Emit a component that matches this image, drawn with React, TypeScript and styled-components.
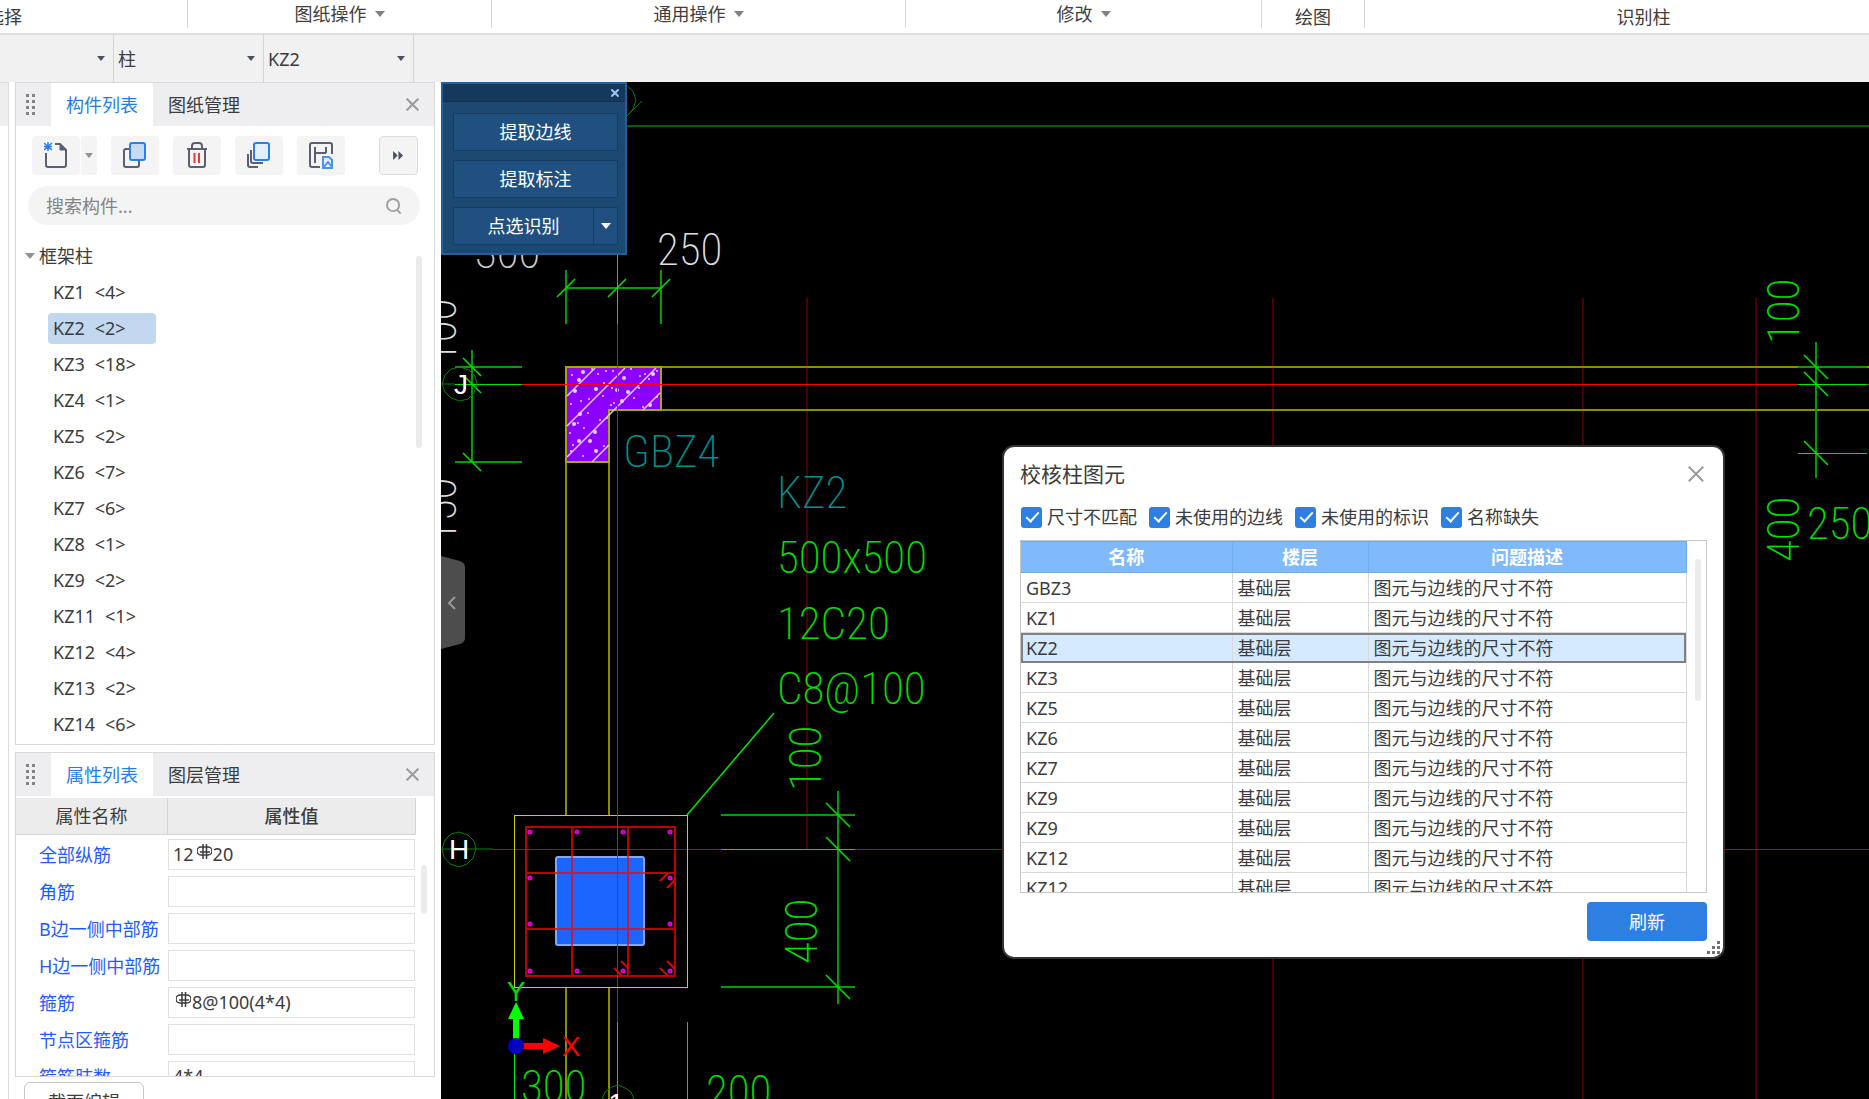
import React, { useState } from 'react';
import styled, { createGlobalStyle, css } from 'styled-components';

const Global = createGlobalStyle`
  *, *::before, *::after { box-sizing: border-box; }
  html, body { margin: 0; }
  body, button, input, select {
    font-family: 'Noto Sans', 'Noto Sans CJK SC', sans-serif;
    font-size: 18px;
    line-height: 24px;
    color: #3c3c3c;
  }
  button { border: 0; padding: 0; background: none; cursor: pointer; }
`;

const Page = styled.div`
  display: flex;
  flex-direction: column;
  height: 100vh;
  overflow: hidden;
  background: #fff;
`;

/* ---------- ribbon ---------- */

const Ribbon = styled.header`
  display: flex;
  flex: none;
  height: 35px;
  overflow: hidden;
  border-bottom: 2px solid #dedede;
`;

const RibbonGroup = styled.div<{ $basis: number; $grow?: boolean; $low?: boolean }>`
  display: flex;
  flex: ${p => (p.$grow ? 1 : 0)} 0 ${p => p.$basis}px;
  align-items: center;
  justify-content: center;
  height: 28px;
  padding-top: ${p => (p.$low ? 6 : 0)}px;
  border-right: 1px solid #d9d9d9;
  white-space: nowrap;
`;

const RibbonEdge = styled(RibbonGroup)`
  justify-content: flex-end;
  min-width: 0;
  padding-right: 165px;
`;

const RibbonButton = styled.button`
  display: flex;
  align-items: center;
  gap: 8px;
  color: #404040;
`;

const Caret = styled.span<{ $size?: number; $color?: string }>`
  flex: none;
  width: 0;
  height: 0;
  border: ${p => p.$size ?? 5}px solid transparent;
  border-bottom: 0;
  border-top: ${p => (p.$size ?? 5) + 1}px solid ${p => p.$color ?? '#808080'};
`;

/* ---------- selector bar ---------- */

const SelectorBar = styled.div`
  display: flex;
  flex: none;
  height: 47px;
  background: #f1f1f1;
`;

const SelectCell = styled.label<{ $width: number }>`
  display: flex;
  align-items: center;
  width: ${p => p.$width}px;
  padding-right: 8px;
  border-right: 1px solid #d4d4d4;
`;

const Select = styled.select`
  flex: 1;
  min-width: 0;
  padding: 0 0 0 4px;
  border: 0;
  background: none;
  appearance: none;
`;

/* ---------- work area ---------- */

const Work = styled.main`
  display: flex;
  flex: 1;
  min-height: 0;
`;

const EdgePanel = styled.div`
  flex: none;
  width: 9px;
  border-right: 1px solid #dcdcdc;
  border-top: 1px solid #dcdcdc;
  background: linear-gradient(#eeeef0 43px, #fff 43px);
`;

const Sidebar = styled.aside`
  display: flex;
  flex: none;
  flex-direction: column;
  gap: 7px;
  width: 432px;
  padding: 0 6px;
`;

const Panel = styled.section`
  flex: none;
  border: 1px solid #d8d8d8;
  background: #fff;
`;

const TabBar = styled.div`
  display: flex;
  height: 43px;
  padding-right: 15px;
  background: #eeeef0;
`;

const Grip = styled.span`
  display: grid;
  place-items: center start;
  width: 35px;
  padding-left: 10px;
`;

const Tab = styled.button<{ $active?: boolean }>`
  width: 102px;
  color: ${p => (p.$active ? '#1f7fe6' : '#3c3c3c')};
  background: ${p => (p.$active ? '#fff' : 'none')};
`;

const CloseButton = styled.button`
  display: grid;
  place-items: center;
  margin-left: auto;
`;

const Tools = styled.div`
  display: flex;
  gap: 14px;
  padding: 10px 16px 11px;
`;

const tool = css`
  display: grid;
  place-items: center;
  width: 48px;
  height: 39px;
  border-radius: 4px;
  background: #f4f4f4;
`;

const Tool = styled.button`
  ${tool}
`;

const SplitTool = styled.div`
  display: flex;
  gap: 1px;
`;

const SplitArrow = styled.button`
  ${tool}
  width: 16px;
`;

const MoreTool = styled.button`
  ${tool}
  width: 39px;
  margin-left: auto;
  border: 1px solid #dcdcdc;
`;

const SearchBox = styled.label`
  display: flex;
  align-items: center;
  height: 39px;
  margin: 0 14px 0 12px;
  padding: 0 18px;
  border-radius: 20px;
  background: #f4f4f4;
`;

const SearchInput = styled.input`
  flex: 1;
  min-width: 0;
  padding: 0;
  border: 0;
  outline: 0;
  background: none;
  &::placeholder { color: #848484; opacity: 1; }
`;

const TreeArea = styled.div`
  display: flex;
  justify-content: space-between;
  height: 519px;
  padding: 13px 12px 0 9px;
`;

const TreeHead = styled.div`
  display: flex;
  align-items: center;
  gap: 4px;
  height: 36px;
`;

const Tree = styled.ul`
  margin: 0;
  padding: 0 0 0 23px;
  list-style: none;
`;

const TreeItem = styled.li`
  display: flex;
  align-items: center;
  height: 36px;
`;

const TreeButton = styled.button<{ $selected: boolean }>`
  display: flex;
  gap: 10px;
  min-width: 108px;
  height: 31px;
  align-items: center;
  padding: 0 5px;
  border-radius: 4px;
  background: ${p => (p.$selected ? '#c2d8f0' : 'none')};
`;

const Thumb = styled.span<{ $height: number; $top?: number }>`
  flex: none;
  width: 6px;
  height: ${p => p.$height}px;
  margin-top: ${p => p.$top ?? 0}px;
  border-radius: 3px;
  background: #ebebeb;
`;

/* ---------- property panel ---------- */

const PropBody = styled.div`
  display: flex;
  justify-content: space-between;
  height: 280px;
  padding-right: 7px;
  overflow: hidden;
`;

const PropGrid = styled.div`
  width: 400px;
`;

const PropHead = styled.div`
  display: grid;
  grid-template-columns: 152px minmax(0, 1fr);
  height: 37px;
  margin: 2px 0 1px;
  border-bottom: 1px solid #d4d4d4;
  background: #ececec;
`;

const PropHeadCell = styled.span<{ $strong?: boolean }>`
  display: grid;
  place-items: center;
  border-right: 1px solid #d4d4d4;
  font-weight: ${p => (p.$strong ? 500 : 400)};
`;

const PropRow = styled.div`
  display: grid;
  grid-template-columns: 152px minmax(0, 1fr);
  align-items: center;
  height: 37px;
`;

const PropLabel = styled.label`
  padding-left: 23px;
  color: #1f5cff;
  white-space: nowrap;
`;

const PropField = styled.div`
  display: flex;
  align-items: center;
  height: 31px;
  margin-right: 1px;
  padding: 0 5px 2px 4px;
  border: 1px solid #e0e0e0;
`;

const PropInput = styled.input`
  flex: 1;
  min-width: 0;
  padding: 0;
  border: 0;
  outline: 0;
  background: none;
`;

const SectionButton = styled.button`
  flex: none;
  align-self: flex-start;
  width: 120px;
  height: 39px;
  margin: -2px 0 0 9px;
  border: 1px solid #c8c8c8;
  border-radius: 6px;
  background: #fff;
`;

/* ---------- drawing canvas ---------- */

const Canvas = styled.section`
  position: relative;
  flex: 1;
  min-width: 0;
  overflow: hidden;
  background: #000;
`;

const Drawing = styled.svg`
  display: block;
  width: 100%;
  height: 100%;
`;

const Note = styled.text`
  font-family: 'Roboto Condensed', 'Roboto', sans-serif;
  font-size: 45px;
  font-weight: 200;
`;

const AxisName = styled.text`
  font-family: 'Liberation Sans', sans-serif;
  font-size: 28px;
  text-anchor: middle;
`;

const Palette = styled.div`
  position: absolute;
  top: 0;
  left: 0;
  width: 186px;
  border: 2px solid #215f9f;
  background: #1d4872;
`;

const PaletteTitle = styled.div`
  display: flex;
  height: 18px;
  padding-right: 6px;
  border-bottom: 1px solid #12304e;
  background: #17385d;
`;

const PaletteBody = styled.div`
  display: flex;
  flex-direction: column;
  gap: 9px;
  padding: 11px 7px 8px 10px;
`;

const PaletteButton = styled.button`
  height: 38px;
  flex: 1 0 auto;
  border: 1px solid #183b60;
  background: #205080;
  color: #fff;
`;

const PaletteSplit = styled.div`
  display: flex;
`;

const PaletteArrow = styled.button`
  display: grid;
  place-items: center;
  width: 24px;
  border: 1px solid #183b60;
  border-left: 0;
  background: #205080;
`;

const Collapse = styled.button`
  position: absolute;
  top: 473px;
  left: 0;
  width: 25px;
  height: 95px;
`;

/* ---------- dialog ---------- */

const Dialog = styled.section`
  position: absolute;
  top: 363px;
  left: 561px;
  width: 723px;
  padding: 0 16px 16px;
  border: 2px solid #333;
  border-radius: 12px;
  background: #fff;
`;

const DialogHead = styled.div`
  display: flex;
  align-items: center;
  height: 57px;
  padding: 0 3px 3px 0;
`;

const DialogTitle = styled.h2`
  margin: 0;
  font-size: 21px;
  font-weight: 400;
`;

const Filters = styled.div`
  display: flex;
  gap: 12px;
  padding: 1px 0 11px 1px;
`;

const Filter = styled.label`
  display: flex;
  align-items: center;
  gap: 5px;
`;

const Check = styled.input`
  appearance: none;
  width: 21px;
  height: 21px;
  margin: 0;
  border-radius: 3px;
  background: #d5d9e0;
  &:checked {
    background: #2d80e2;
  }
  &:checked::before {
    content: '';
    display: block;
    width: 7px;
    height: 13px;
    margin: 2px 0 0 8px;
    border: solid #fff;
    border-width: 0 2px 2px 0;
    transform: rotate(42deg);
  }
`;

const TableBox = styled.div`
  display: flex;
  align-items: flex-start;
  gap: 8px;
  height: 353px;
  overflow: hidden;
  border: 1px solid #c6c6c6;
`;

const Table = styled.table`
  width: 665px;
  border-collapse: collapse;
  table-layout: fixed;
`;

const HeadCell = styled.th<{ $width: number }>`
  width: ${p => p.$width}px;
  height: 31px;
  padding: 0;
  border: 1px solid #6faeed;
  border-left-width: 0;
  background: #80bafb;
  color: #fff;
  font-weight: 700;
`;

const BodyRow = styled.tr<{ $selected: boolean }>`
  height: 30px;
  ${p => p.$selected && css`
    background: #d5e9ff;
    outline: 2px solid #808080;
    outline-offset: -2px;
  `}
`;

const BodyCell = styled.td`
  padding: 0 5px;
  border: 1px solid #d9d9d9;
  border-left-width: 0;
`;

const DialogFoot = styled.div`
  display: flex;
  justify-content: flex-end;
  padding-top: 9px;
`;

const Refresh = styled.button`
  width: 120px;
  height: 39px;
  border-radius: 4px;
  background: #2d80e2;
  color: #fff;
`;

const ResizeGrip = styled.svg`
  position: absolute;
  right: 2px;
  bottom: 2px;
`;

/* ---------- icons ---------- */

const Cross = ({ size, color = '#9a9a9a', width = 2 }: { size: number; color?: string; width?: number }) => (
  <svg width={size} height={size} viewBox="0 0 12 12" stroke={color} strokeWidth={(width * 12) / size} fill="none">
    <path d="M.6.6 11.4 11.4M11.4.6.6 11.4" />
  </svg>
);

const GripDots = () => (
  <svg width="9" height="22" viewBox="0 0 9 22" fill="#848484">
    {[0, 6, 12, 18].map(y => (
      <g key={y}>
        <rect x="0" y={y} width="3" height="3" />
        <rect x="6" y={y} width="3" height="3" />
      </g>
    ))}
  </svg>
);

const NewIcon = () => (
  <svg width="24" height="27" viewBox="0 0 24 27" fill="none" stroke="#5a6070" strokeWidth="2">
    <path d="M2 11v12a2 2 0 0 0 2 2h16a2 2 0 0 0 2-2V8l-6-6h-5" />
    <path d="M16 2v6h6z" fill="#5a6070" strokeWidth="1" />
    <path d="M0 1l8 7M8 1 0 8M4 0v9M0 4.500h8" stroke="#2d80e2" strokeWidth="1.500" />
  </svg>
);

const CopyIcon = () => (
  <svg width="24" height="27" viewBox="0 0 24 27" fill="none" strokeWidth="2">
    <path d="M7 7H3a2 2 0 0 0-2 2v14a2 2 0 0 0 2 2h11a2 2 0 0 0 2-2v-4" stroke="#5a6070" />
    <rect x="7" y="1" width="15" height="17" rx="2" stroke="#2d80e2" fill="#c8daf2" />
  </svg>
);

const TrashIcon = () => (
  <svg width="22" height="27" viewBox="0 0 22 27" fill="none" stroke="#5a6070" strokeWidth="2">
    <path d="M1 7h20M6 7V4a3 3 0 0 1 3-3h4a3 3 0 0 1 3 3v3M3 7v16a2 2 0 0 0 2 2h12a2 2 0 0 0 2-2V7" />
    <path d="M8.500 11v10M13 11v10" stroke="#e03a3a" />
  </svg>
);

const LayerIcon = () => (
  <svg width="24" height="27" viewBox="0 0 24 27" fill="none" strokeWidth="2">
    <path d="M1 12v11a2 2 0 0 0 2 2h8M4 8v11a2 2 0 0 0 2 2h10" stroke="#5a6070" />
    <rect x="7" y="1" width="15" height="17" rx="2" stroke="#2d80e2" fill="#e4f0ff" />
  </svg>
);

const SaveIcon = () => (
  <svg width="24" height="27" viewBox="0 0 24 27" fill="none" strokeWidth="2">
    <path d="M11 25H3a2 2 0 0 1-2-2V3a2 2 0 0 1 2-2h18a2 2 0 0 1 2 2v9" stroke="#5a6070" />
    <path d="M6 5v16M17 5v6M6 11h11" stroke="#5a6070" />
    <path d="M14 15h6l3 3v8h-9zM15 25l4-5 4 5" fill="#e4f0ff" stroke="#4a92ea" />
  </svg>
);

const MoreIcon = () => (
  <svg width="11" height="9" viewBox="0 0 12 10" fill="#4a5060">
    <path d="M0 0 5 5 0 10zM6 0l5 5-5 5z" />
  </svg>
);

const SearchIcon = () => (
  <svg width="16" height="18" viewBox="0 0 17 18" fill="none" stroke="#a0a0a0" strokeWidth="2">
    <circle cx="7.500" cy="8" r="6.500" />
    <path d="m12 13 3.500 4" />
  </svg>
);

const Mark = styled.svg`
  margin: 0 1px 5px 3px;
`;

const RebarMark = () => (
  <Mark width="15" height="15" viewBox="0 0 15 15" fill="none" stroke="#3c3c3c" strokeWidth="1.500">
    <path d="M5 3H4a3.500 3.500 0 0 0 0 8h7a3.500 3.500 0 0 0 0-8H5M6 0v15M9.500 0v15M3 8h10" />
  </Mark>
);

/* ---------- data ---------- */

const columns: [string, number][] = [
  ['KZ1', 4], ['KZ2', 2], ['KZ3', 18], ['KZ4', 1], ['KZ5', 2], ['KZ6', 7], ['KZ7', 6],
  ['KZ8', 1], ['KZ9', 2], ['KZ11', 1], ['KZ12', 4], ['KZ13', 2], ['KZ14', 6],
];

const properties = [
  { label: '全部纵筋', before: '12', mark: true, value: '20' },
  { label: '角筋', value: '' },
  { label: 'B边一侧中部筋', value: '' },
  { label: 'H边一侧中部筋', value: '' },
  { label: '箍筋', mark: true, value: '8@100(4*4)' },
  { label: '节点区箍筋', value: '' },
  { label: '箍筋肢数', value: '4*4' },
];

const issues = ['GBZ3', 'KZ1', 'KZ2', 'KZ3', 'KZ5', 'KZ6', 'KZ7', 'KZ9', 'KZ9', 'KZ12', 'KZ12'];
const filters = ['尺寸不匹配', '未使用的边线', '未使用的标识', '名称缺失'];

/* ---------- drawing ---------- */

const GREEN = '#009c00';
const BRIGHT = '#00e400';

const ticks = (points: number[][], rise: number, size = 9) =>
  points.map(([x, y]) => `M${x - size} ${y - rise * size}L${x + size} ${y + rise * size}`).join('');

const specks = [
  [583, 372], [592, 369], [598, 374], [579, 380], [606, 371], [613, 371], [624, 378], [631, 369],
  [645, 374], [653, 374], [649, 379], [657, 371], [575, 391], [581, 401], [589, 399], [596, 389],
  [604, 383], [612, 388], [617, 390], [614, 403], [611, 405], [628, 392], [634, 398], [643, 407],
  [650, 405], [657, 397], [571, 404], [580, 414], [588, 413], [603, 396], [574, 424], [570, 433],
  [584, 428], [595, 432], [600, 420], [607, 418], [579, 441], [573, 445], [571, 451], [596, 451],
  [604, 446], [583, 456], [590, 441], [578, 423], [639, 388], [622, 401], [572, 375], [640, 376],
];

const bars = [
  [530, 832], [577, 832], [623, 832], [670, 832], [530, 878], [670, 878],
  [530, 924], [670, 924], [530, 971], [577, 971], [623, 971], [670, 971],
];

const Plan = () => (
  <Drawing aria-label="柱平面图">
    <g transform="translate(-441 -82)" fill="none" strokeWidth="2">
      <g shapeRendering="crispEdges">
        <path d="M807 298V849M1273 298V1099M1583 298V1099M1756 298V1099" stroke="#480000" />
        <path d="M441 126H3000" stroke="#006000" />
        <path d="M566 816V367H3000M609 816V410H3000M566 987V1099M609 987V1099" stroke="#8c8c00" />
      </g>
      <path d="M626 85l7 6 3 9-3 9-6 7M642 101l-14 14" stroke="#007800" strokeWidth="1" />

      <path d="M566 367H661V410H609V462H566Z" fill="#8c00ff" stroke="#a8a800" />
      <path
        d="M567 396 595 368M567 426 625 368M567 457 656 368M592 462 609 445M643 410 660 393"
        stroke="#e0c8ff"
        strokeWidth="1.500"
      />
      <g fill="#e6d2ff">
        {specks.map(([x, y], i) => <circle key={i} cx={x} cy={y} r={i % 3 ? 1 : 2} />)}
      </g>

      <g shapeRendering="crispEdges" strokeWidth="1">
        <path d="M522 384H3000M617 324V1022" stroke="#ff0000" />
        <path d="M493 849H3000" stroke="#c00000" />
      </g>

      <g shapeRendering="crispEdges" stroke={GREEN}>
        <path d="M566 288H661M566 270V324M661 270V324" />
        <path d="M472 350V462M455 367H522M455 462H522" />
        <path d="M838 791V1004M721 815H855M721 987H855" />
        <path d="M1816 342V478M1798 367H1867" />
      </g>
      <g shapeRendering="crispEdges" stroke={BRIGHT} strokeWidth="1">
        <path d="M617 255V324M455 384H522M721 849H855M1798 384H1867M1798 453H1867" />
        <path d="M514 1054V1099M617 1022V1099M687 1022V1099" />
      </g>
      <g stroke={BRIGHT} strokeWidth="1.500">
        <path d={ticks([[566, 288], [617, 288], [661, 288]], -1)} />
        <path d={ticks([[472, 367], [472, 384], [472, 462]], 1)} />
        <path d={ticks([[838, 815], [838, 849], [838, 987]], 1, 12)} />
        <path d={ticks([[1816, 367], [1816, 384], [1816, 453]], 1, 12)} />
        <path d="M774 713 687 815" />
      </g>

      <rect x="556" y="857" width="88" height="88" rx="2" fill="#1a66ff" stroke="#80a6ff" />
      <rect x="514" y="815" width="173" height="172" stroke="#d0d000" strokeWidth="1" shapeRendering="crispEdges" />
      <g shapeRendering="crispEdges">
        <path
          d="M526 827H675V976H526ZM572 827V976M628 827V976M526 873H675M526 929H675"
          stroke="#ff0000"
          strokeOpacity=".75"
        />
        <path d="M617 815V987" stroke="#ff0000" strokeWidth="1" />
      </g>
      <path
        d="M660 881l8-8M667 888l8-8M660 968l8 8M667 961l8 8M614 968l8 8M621 961l8 8"
        stroke="#e00000"
      />
      <g stroke="#e000e0">
        {bars.map(([x, y], i) => <circle key={i} cx={x} cy={y} r="1.500" />)}
      </g>

      <g stroke="#008000" strokeWidth="1">
        <path d="M460 367l9 3 6 6 2 8-3 9-6 6-8 2-9-3-6-6-3-8 3-9 6-6zM442 384H455" />
        <path d="M459 832l9 3 6 6 2 8-3 9-6 6-8 3-9-3-6-7-2-8 3-9 6-6zM442 849H493" />
        <path d="M602 1099l3-7 7-5 6-2 7 3 6 4 3 7" />
      </g>

      <g stroke="none">
        <AxisName x="461" y="394" fill="#fff">J</AxisName>
        <AxisName x="459" y="859" fill="#fff">H</AxisName>
        <AxisName x="616" y="1113" fill="#fff">1</AxisName>
        <Note x="475" y="268" fill="#d0d0d0">300</Note>
        <Note x="657" y="265" fill="#e0e0e0">250</Note>
        <Note transform="translate(456 364) rotate(-90)" fill="#e0e0e0">100</Note>
        <Note transform="translate(456 543) rotate(-90)" fill="#e0e0e0">150</Note>
        <Note x="623" y="467" fill="#009090">GBZ4</Note>
        <Note x="777" y="508" fill="#009090">KZ2</Note>
        <Note x="777" y="573" fill="#00e000">500x500</Note>
        <Note x="777" y="639" fill="#00e000">12C20</Note>
        <Note x="777" y="704" fill="#00e000">C8@100</Note>
        <Note transform="translate(821 791) rotate(-90)" fill="#00e000">100</Note>
        <Note transform="translate(817 964) rotate(-90)" fill="#00e000">400</Note>
        <Note x="521" y="1102" fill="#00e000">300</Note>
        <Note x="706" y="1107" fill="#00e000">200</Note>
        <Note transform="translate(1799 344) rotate(-90)" fill="#00e000">100</Note>
        <Note transform="translate(1799 562) rotate(-90)" fill="#00e000">400</Note>
        <Note x="1807" y="539" fill="#00e000">250</Note>
      </g>

      <g stroke="none">
        <path d="M513 1040V1019H508L516 1002 524 1019H519V1040Z" fill="#00ff00" />
        <path d="M522 1043H543V1038L560 1046 543 1054V1049H522Z" fill="#ff0000" />
        <circle cx="516" cy="1046" r="8" fill="#0000c0" />
        <AxisName x="516" y="1001" fill="#00e000">Y</AxisName>
        <AxisName x="571" y="1056" fill="#ff0000">X</AxisName>
      </g>
    </g>
  </Drawing>
);

export default function App() {
  const [selected, setSelected] = useState('KZ2');

  return (
    <Page>
      <Global />
      <Ribbon>
        <RibbonEdge $basis={188} $low>选择</RibbonEdge>
        <RibbonGroup $basis={304}>
          <RibbonButton>图纸操作<Caret /></RibbonButton>
        </RibbonGroup>
        <RibbonGroup $basis={414}>
          <RibbonButton>通用操作<Caret /></RibbonButton>
        </RibbonGroup>
        <RibbonGroup $basis={356}>
          <RibbonButton>修改<Caret /></RibbonButton>
        </RibbonGroup>
        <RibbonGroup $basis={103} $low>绘图</RibbonGroup>
        <RibbonGroup $basis={558} $grow $low>识别柱</RibbonGroup>
      </Ribbon>

      <SelectorBar>
        <SelectCell $width={114}>
          <Select aria-label="楼层"><option value=""> </option></Select>
          <Caret $size={4} $color="#4a5060" />
        </SelectCell>
        <SelectCell $width={150}>
          <Select aria-label="构件类型"><option>柱</option></Select>
          <Caret $size={4} $color="#4a5060" />
        </SelectCell>
        <SelectCell $width={150}>
          <Select aria-label="构件"><option>KZ2</option></Select>
          <Caret $size={4} $color="#4a5060" />
        </SelectCell>
      </SelectorBar>

      <Work>
        <EdgePanel />
        <Sidebar>
          <Panel>
            <TabBar>
              <Grip><GripDots /></Grip>
              <Tab $active>构件列表</Tab>
              <Tab>图纸管理</Tab>
              <CloseButton aria-label="关闭"><Cross size={13} /></CloseButton>
            </TabBar>
            <Tools>
              <SplitTool>
                <Tool aria-label="新建"><NewIcon /></Tool>
                <SplitArrow aria-label="新建选项"><Caret $size={4} $color="#909090" /></SplitArrow>
              </SplitTool>
              <Tool aria-label="复制"><CopyIcon /></Tool>
              <Tool aria-label="删除"><TrashIcon /></Tool>
              <Tool aria-label="层间复制"><LayerIcon /></Tool>
              <Tool aria-label="构件存盘"><SaveIcon /></Tool>
              <MoreTool aria-label="更多"><MoreIcon /></MoreTool>
            </Tools>
            <SearchBox>
              <SearchInput aria-label="搜索构件" placeholder="搜索构件..." />
              <SearchIcon />
            </SearchBox>
            <TreeArea>
              <div>
                <TreeHead><Caret $color="#909090" />框架柱</TreeHead>
                <Tree>
                  {columns.map(([name, count]) => (
                    <TreeItem key={name}>
                      <TreeButton $selected={name === selected} onClick={() => setSelected(name)}>
                        <span>{name}</span>
                        <span>&lt;{count}&gt;</span>
                      </TreeButton>
                    </TreeItem>
                  ))}
                </Tree>
              </div>
              <Thumb $height={192} $top={18} />
            </TreeArea>
          </Panel>

          <Panel>
            <TabBar>
              <Grip><GripDots /></Grip>
              <Tab $active>属性列表</Tab>
              <Tab>图层管理</Tab>
              <CloseButton aria-label="关闭"><Cross size={13} /></CloseButton>
            </TabBar>
            <PropBody>
              <PropGrid>
                <PropHead>
                  <PropHeadCell>属性名称</PropHeadCell>
                  <PropHeadCell $strong>属性值</PropHeadCell>
                </PropHead>
                {properties.map((p, i) => (
                  <PropRow key={p.label}>
                    <PropLabel htmlFor={`prop-${i}`}>{p.label}</PropLabel>
                    <PropField>
                      {p.before && <span>{p.before}</span>}
                      {p.mark && <RebarMark />}
                      <PropInput id={`prop-${i}`} defaultValue={p.value} />
                    </PropField>
                  </PropRow>
                ))}
              </PropGrid>
              <Thumb $height={49} $top={69} />
            </PropBody>
          </Panel>
          <SectionButton>截面编辑</SectionButton>
        </Sidebar>

        <Canvas>
          <Plan />

          <Palette>
            <PaletteTitle>
              <CloseButton aria-label="关闭"><Cross size={8} color="#9cc4ee" /></CloseButton>
            </PaletteTitle>
            <PaletteBody>
              <PaletteButton>提取边线</PaletteButton>
              <PaletteButton>提取标注</PaletteButton>
              <PaletteSplit>
                <PaletteButton>点选识别</PaletteButton>
                <PaletteArrow aria-label="识别方式"><Caret $color="#fff" /></PaletteArrow>
              </PaletteSplit>
            </PaletteBody>
          </Palette>

          <Collapse aria-label="收起">
            <svg width="25" height="95" viewBox="0 0 25 95">
              <path d="M0 1 19 6q5 2 5 6v71q0 4-5 6L0 94z" fill="#4d4d4d" />
              <path d="M14 42 8 48l6 6" fill="none" stroke="#9a9a9a" strokeWidth="2" />
            </svg>
          </Collapse>

          <Dialog role="dialog" aria-label="校核柱图元">
            <DialogHead>
              <DialogTitle>校核柱图元</DialogTitle>
              <CloseButton aria-label="关闭"><Cross size={16} /></CloseButton>
            </DialogHead>
            <Filters>
              {filters.map(f => (
                <Filter key={f}><Check type="checkbox" defaultChecked />{f}</Filter>
              ))}
            </Filters>
            <TableBox>
              <Table>
                <thead>
                  <tr>
                    <HeadCell $width={211}>名称</HeadCell>
                    <HeadCell $width={136}>楼层</HeadCell>
                    <HeadCell $width={318}>问题描述</HeadCell>
                  </tr>
                </thead>
                <tbody>
                  {issues.map((name, i) => (
                    <BodyRow key={i} $selected={i === 2}>
                      <BodyCell>{name}</BodyCell>
                      <BodyCell>基础层</BodyCell>
                      <BodyCell>图元与边线的尺寸不符</BodyCell>
                    </BodyRow>
                  ))}
                </tbody>
              </Table>
              <Thumb $height={142} $top={18} />
            </TableBox>
            <DialogFoot><Refresh>刷新</Refresh></DialogFoot>
            <ResizeGrip width="14" height="14" viewBox="0 0 14 14" fill="#707070">
              <path d="M10 0h3v3h-3zM10 5h3v3h-3zM5 5h3v3H5zM10 10h3v3h-3zM5 10h3v3H5zM0 10h3v3H0z" />
            </ResizeGrip>
          </Dialog>
        </Canvas>
      </Work>
    </Page>
  );
}
